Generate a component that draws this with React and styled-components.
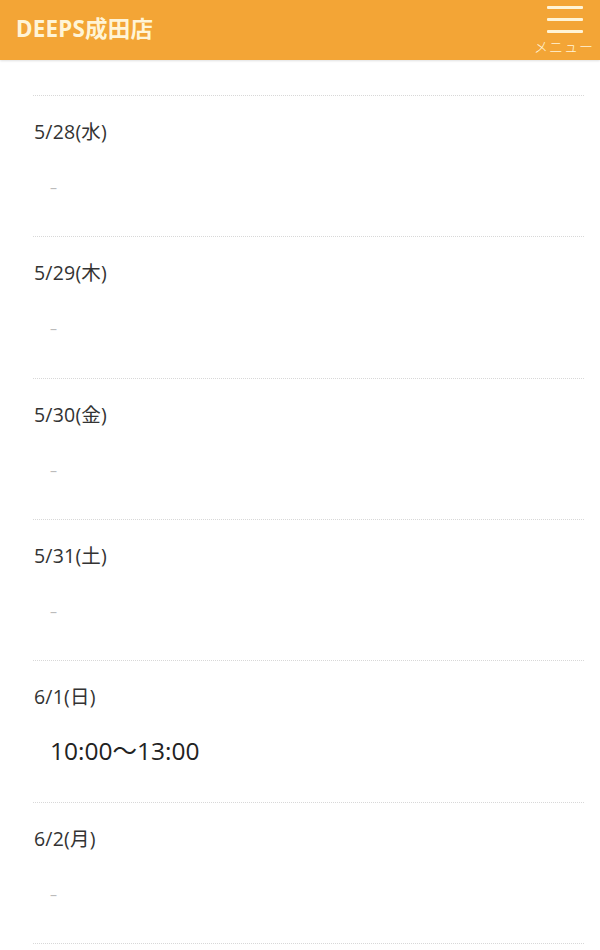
import React from "react";
import styled, { createGlobalStyle } from "styled-components";

const Global = createGlobalStyle`
  html, body { margin: 0; padding: 0; background: #fff; }
  body { font-family: "Open Sans", "Noto Sans CJK JP", sans-serif; }
`;

const Page = styled.div`
  width: 600px;
  height: 950px;
  overflow: hidden;
  background: #fff;
`;

const Header = styled.header`
  height: 60px;
  background: #f3a536;
  display: flex;
  align-items: center;
  justify-content: space-between;
  padding: 0 6px 0 16px;
  box-sizing: border-box;
  box-shadow: 0 1px 2px rgba(0,0,0,0.12);
`;

const Title = styled.h1`
  margin: 0;
  font-family: "Noto Sans", "Noto Sans CJK JP", sans-serif;
  font-weight: 700;
  font-size: 22.5px;
  letter-spacing: 0.2px;
  color: #fff4d6;
  line-height: 1;
  padding-bottom: 2px;
`;

const MenuButton = styled.div`
  display: flex;
  flex-direction: column;
  align-items: center;
  height: 60px;
  padding-top: 6px;
  box-sizing: border-box;
`;

const Bars = styled.div`
  width: 36px;
  display: flex;
  flex-direction: column;
  gap: 9px;
  margin-left: 1px;
`;

const Bar = styled.span`
  display: block;
  height: 3px;
  background: #fff4d6;
  border-radius: 1px;
`;

const MenuLabel = styled.span`
  margin-top: 6px;
  font-family: "Noto Sans CJK JP", sans-serif;
  font-weight: 300;
  font-size: 14px;
  line-height: 1;
  color: #fff4d6;
  letter-spacing: 1px;
`;

const List = styled.div`
  margin: 35px 16px 0 33px;
`;

const Row = styled.div`
  height: 141.33px;
  border-top: 1px dotted #d8d8d8;
  box-sizing: border-box;
  display: flex;
  flex-direction: column;
`;

const DateLabel = styled.div`
  margin-top: 23px;
  padding-left: 1px;
  font-size: 19.5px;
  line-height: 26px;
  letter-spacing: 0.2px;
  color: #333;
`;

const Value = styled.div`
  margin-top: ${p => (p.$time ? "24px" : "33px")};
  padding-left: 17px;
  font-size: ${p => (p.$time ? "24.5px" : "14px")};
  line-height: ${p => (p.$time ? "34px" : "20px")};
  color: ${p => (p.$time ? "#222" : "#bbb")};
`;

const days = [
  { d: "5/28(水)", v: null },
  { d: "5/29(木)", v: null },
  { d: "5/30(金)", v: null },
  { d: "5/31(土)", v: null },
  { d: "6/1(日)", v: "10:00〜13:00" },
  { d: "6/2(月)", v: null },
  { d: "", v: undefined },
];

export default function App() {
  return (
    <Page>
      <Global />
      <Header>
        <Title>DEEPS成田店</Title>
        <MenuButton>
          <Bars>
            <Bar />
            <Bar />
            <Bar />
          </Bars>
          <MenuLabel>メニュー</MenuLabel>
        </MenuButton>
      </Header>
      <List>
        {days.map((r, i) => (
          <Row key={i}>
            {r.d && <DateLabel>{r.d}</DateLabel>}
            {r.v === null && <Value>–</Value>}
            {r.v && <Value $time>{r.v}</Value>}
          </Row>
        ))}
      </List>
    </Page>
  );
}
